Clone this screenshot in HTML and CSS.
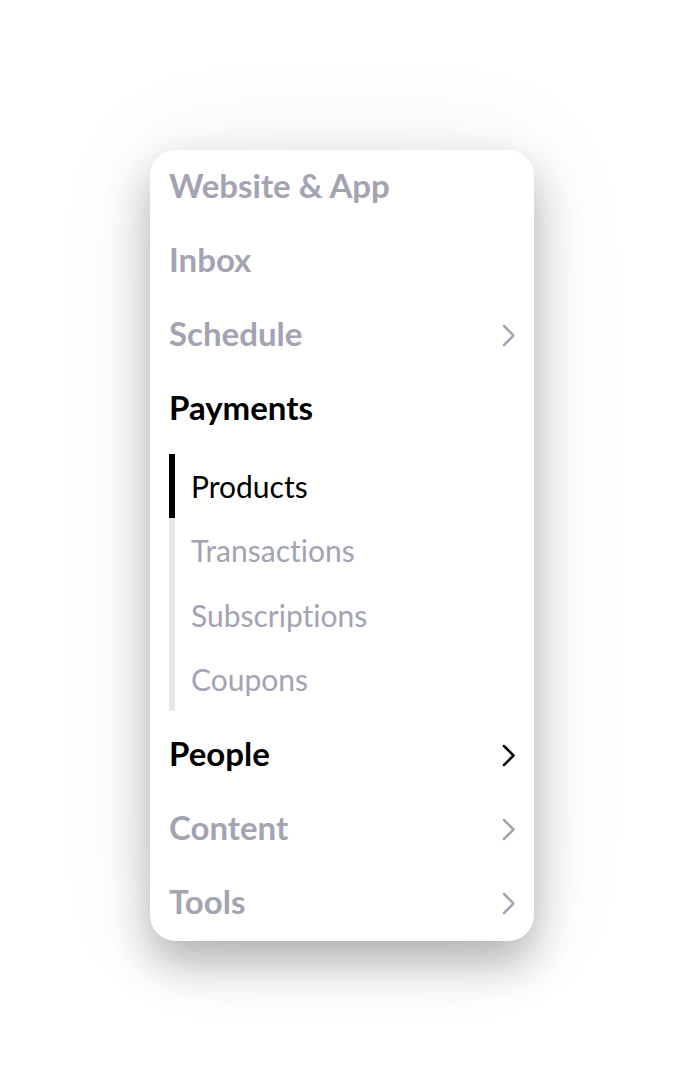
FILE: index.html
```html
<!DOCTYPE html>
<html>
<head>
<meta charset="utf-8">
<link rel="stylesheet" href="styles.css">
</head>
<body>
<div class="stage">
  <nav class="menu">
    <div class="item">Website &amp; App</div>
    <div class="item">Inbox</div>
    <div class="item">Schedule<svg class="chev" viewBox="0 0 14 23"><path d="M2 2l9.5 9.5L2 21"/></svg></div>
    <div class="item active">Payments</div>
    <div class="sub">
      <div class="subitem current">Products</div>
      <div class="subitem">Transactions</div>
      <div class="subitem">Subscriptions</div>
      <div class="subitem">Coupons</div>
    </div>
    <div class="item active">People<svg class="chev" viewBox="0 0 14 23"><path d="M2 2l9.5 9.5L2 21"/></svg></div>
    <div class="item">Content<svg class="chev" viewBox="0 0 14 23"><path d="M2 2l9.5 9.5L2 21"/></svg></div>
    <div class="item">Tools<svg class="chev" viewBox="0 0 14 23"><path d="M2 2l9.5 9.5L2 21"/></svg></div>
  </nav>
</div>
</body>
</html>
```

FILE: styles.css
```css
html, body {
  margin: 0;
  padding: 0;
  background: #ffffff;
}
.stage {
  width: 684px;
  height: 1092px;
  padding-top: 150px;
  padding-left: 150px;
  box-sizing: border-box;
}
.menu {
  width: 384px;
  box-sizing: border-box;
  background: #fff;
  border-radius: 26px;
  padding: 0 19px 1px 19px;
  box-shadow: 0 22px 44px rgba(0,0,0,0.28), 0 0 110px rgba(0,0,0,0.07);
  font-family: Lato, "Open Sans", sans-serif;
  font-variant-ligatures: none;
}
.item {
  height: 74px;
  box-sizing: border-box;
  padding-bottom: 4px;
  display: flex;
  align-items: center;
  justify-content: space-between;
  font-size: 33px;
  font-weight: 700;
  color: #a3a3b2;
}
.item.active {
  color: #000;
}
.chev {
  width: 14px;
  height: 23px;
  fill: none;
  stroke: currentColor;
  stroke-width: 2.5;
  stroke-linecap: round;
  stroke-linejoin: round;
  margin-right: -1px;
  margin-top: 4px;
}
.sub {
  margin: 8px 0 7px 0;
  border-left: 6px solid #e7e7ec;
}
.subitem {
  height: 64.25px;
  display: flex;
  align-items: center;
  padding-left: 16px;
  font-size: 30px;
  font-weight: 400;
  color: #a3a3b2;
  margin-left: -6px;
  border-left: 6px solid transparent;
}
.subitem.current {
  color: #000;
  border-left-color: #000;
}
```
